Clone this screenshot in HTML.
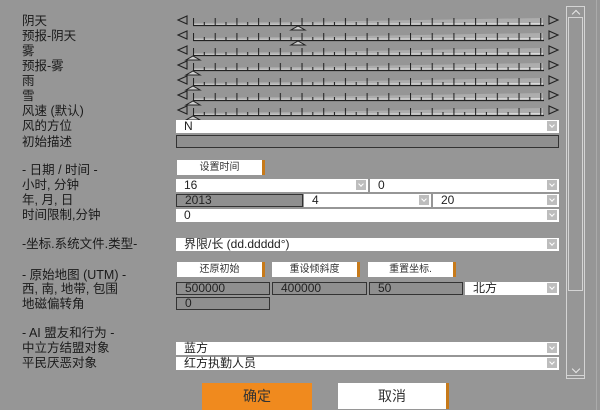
<!DOCTYPE html>
<html><head><meta charset="utf-8"><style>
body{margin:0;width:600px;height:410px;background:#969696;position:relative;overflow:hidden;font-family:"Liberation Sans","Noto Sans CJK SC",sans-serif;color:#1a1a1a}
.l{position:absolute;left:22px;font-size:12.5px;line-height:14px;white-space:nowrap}
.w{position:absolute;background:#fff;height:13px;font-size:12px;line-height:13px;padding-left:8px;box-sizing:border-box;color:#222}
.g{position:absolute;background:#8f8f8f;border:1px solid #333;height:13px;font-size:12px;line-height:11px;padding-left:8px;box-sizing:border-box;color:#222}
.dd::after{content:"";position:absolute;right:2px;top:1px;width:10px;height:10px;background:#bdbdbd}
.dd::before{content:"";position:absolute;right:5px;top:3px;width:3px;height:3px;border-right:1px solid #fff;border-bottom:1px solid #fff;transform:rotate(45deg);z-index:2}
.b{position:absolute;background:#fff;border-right:3px solid #c77a1a;height:15px;font-size:10px;line-height:15px;text-align:center;box-sizing:border-box;color:#333}
</style></head><body>
<svg width="600" height="130" style="position:absolute;left:0;top:0">
<defs>
<pattern id="t" x="193" y="10" width="21.7" height="15" patternUnits="userSpaceOnUse">
<line x1="0.5" y1="8" x2="0.5" y2="15" stroke="#222" stroke-width="1.1"/>
<line x1="11.3" y1="12" x2="11.3" y2="15" stroke="#222" stroke-width="1.1"/>
</pattern>
</defs>
<g fill="none" stroke="#222" stroke-width="1.1">
<polygon points="187,16 187,24 178,20"/>
<polygon points="187,31 187,39 178,35"/>
<polygon points="187,46 187,54 178,50"/>
<polygon points="187,61 187,69 178,65"/>
<polygon points="187,76 187,84 178,80"/>
<polygon points="187,91 187,99 178,95"/>
<polygon points="187,106 187,114 178,110"/>
<polygon points="549,16 549,24 558,20"/>
<polygon points="549,31 549,39 558,35"/>
<polygon points="549,46 549,54 558,50"/>
<polygon points="549,61 549,69 558,65"/>
<polygon points="549,76 549,84 558,80"/>
<polygon points="549,91 549,99 558,95"/>
<polygon points="549,106 549,114 558,110"/>
</g>
<g fill="#adadad">
<polygon points="193,25 543,25 543,18 300,22 193,23"/>
<polygon points="193,40 543,40 543,33 300,37 193,38"/>
<polygon points="193,55 543,55 543,48 300,52 193,53"/>
<polygon points="193,70 543,70 543,63 300,67 193,68"/>
<polygon points="193,85 543,85 543,78 300,82 193,83"/>
<polygon points="193,100 543,100 543,93 300,97 193,98"/>
<polygon points="193,115 543,115 543,108 300,112 193,113"/>
</g>
<g fill="#dadada">
<polygon points="193,25 543,25 543,23 193,24"/>
<polygon points="193,40 543,40 543,38 193,39"/>
<polygon points="193,55 543,55 543,53 193,54"/>
<polygon points="193,70 543,70 543,68 193,69"/>
<polygon points="193,85 543,85 543,83 193,84"/>
<polygon points="193,100 543,100 543,98 193,99"/>
<polygon points="193,115 543,115 543,113 193,114"/>
</g>
<rect x="193" y="10" width="352" height="106" fill="url(#t)"/>
<g stroke="#222" stroke-width="1.2">
<line x1="193" y1="25.5" x2="544" y2="25.5"/>
<line x1="193" y1="40.5" x2="544" y2="40.5"/>
<line x1="193" y1="55.5" x2="544" y2="55.5"/>
<line x1="193" y1="70.5" x2="544" y2="70.5"/>
<line x1="193" y1="85.5" x2="544" y2="85.5"/>
<line x1="193" y1="100.5" x2="544" y2="100.5"/>
<line x1="193" y1="115.5" x2="544" y2="115.5"/>
</g>
<g fill="#ccc" stroke="#222" stroke-width="1">
<polygon points="291,30 305,30 298,26"/>
<polygon points="291,45 305,45 298,41"/>
<polygon points="186,60 200,60 193,56"/>
<polygon points="186,75 200,75 193,71"/>
<polygon points="186,90 200,90 193,86"/>
<polygon points="186,105 200,105 193,101"/>
<polygon points="186,120 200,120 193,116"/>
</g>
</svg>

<div class="l" style="top:14px">阴天</div>
<div class="l" style="top:29px">预报-阴天</div>
<div class="l" style="top:44px">雾</div>
<div class="l" style="top:59px">预报-雾</div>
<div class="l" style="top:74px">雨</div>
<div class="l" style="top:89px">雪</div>
<div class="l" style="top:104px">风速 (默认)</div>
<div class="l" style="top:119px">风的方位</div>
<div class="l" style="top:135px">初始描述</div>
<div class="l" style="top:163px">- 日期 / 时间 -</div>
<div class="l" style="top:178px">小时, 分钟</div>
<div class="l" style="top:193px">年, 月, 日</div>
<div class="l" style="top:208px">时间限制,分钟</div>
<div class="l" style="top:237px">-坐标.系统文件.类型-</div>
<div class="l" style="top:268px">- 原始地图 (UTM) -</div>
<div class="l" style="top:282px">西, 南, 地带, 包围</div>
<div class="l" style="top:297px">地磁偏转角</div>
<div class="l" style="top:326px">- AI 盟友和行为 -</div>
<div class="l" style="top:341px">中立方结盟对象</div>
<div class="l" style="top:356px">平民厌恶对象</div>

<div class="w dd" style="left:176px;top:120px;width:383px">N</div>
<div class="g" style="left:176px;top:135px;width:383px;height:13px"></div>
<div class="b" style="left:177px;top:160px;width:88px">设置时间</div>
<div class="w dd" style="left:176px;top:179px;width:192px">16</div>
<div class="w dd" style="left:370px;top:179px;width:189px">0</div>
<div class="g" style="left:176px;top:194px;width:127px">2013</div>
<div class="w dd" style="left:304px;top:194px;width:127px">4</div>
<div class="w dd" style="left:433px;top:194px;width:126px">20</div>
<div class="w dd" style="left:176px;top:209px;width:383px">0</div>
<div class="w dd" style="left:176px;top:238px;width:383px">界限/长 (dd.ddddd°)</div>
<div class="b" style="left:177px;top:262px;width:88px">还原初始</div>
<div class="b" style="left:272px;top:262px;width:88px">重设倾斜度</div>
<div class="b" style="left:368px;top:262px;width:88px">重置坐标.</div>
<div class="g" style="left:176px;top:282px;width:94px">500000</div>
<div class="g" style="left:272px;top:282px;width:95px">400000</div>
<div class="g" style="left:369px;top:282px;width:94px">50</div>
<div class="w dd" style="left:465px;top:282px;width:94px">北方</div>
<div class="g" style="left:176px;top:297px;width:94px">0</div>
<div class="w dd" style="left:176px;top:342px;width:383px">蓝方</div>
<div class="w dd" style="left:176px;top:357px;width:383px">红方执勤人员</div>

<div style="position:absolute;left:202px;top:383px;width:110px;height:27px;background:#f08a1e;font-size:14px;line-height:27px;text-align:center;color:#333">确定</div>
<div style="position:absolute;left:338px;top:383px;width:111px;height:26px;background:#fff;border-right:3px solid #c77a1a;box-sizing:border-box;font-size:14px;line-height:26px;text-align:center;color:#333">取消</div>

<div style="position:absolute;left:566px;top:6px;width:19px;height:373px;border:1px solid #d4d4d4;box-sizing:border-box"></div>
<div style="position:absolute;left:568px;top:17px;width:15px;height:274px;border:1px solid #d4d4d4;box-sizing:border-box"></div>
<div style="position:absolute;left:573px;top:11px;width:5px;height:5px;border-left:1px solid #e8e8e8;border-top:1px solid #e8e8e8;transform:rotate(45deg)"></div>
<div style="position:absolute;left:573px;top:366px;width:5px;height:5px;border-right:1px solid #e8e8e8;border-bottom:1px solid #e8e8e8;transform:rotate(45deg)"></div>
<div style="position:absolute;left:567px;top:375px;width:17px;height:1px;background:#d4d4d4"></div>
<div style="position:absolute;left:596px;top:0;width:1px;height:410px;background:#aaa"></div>
</body></html>
